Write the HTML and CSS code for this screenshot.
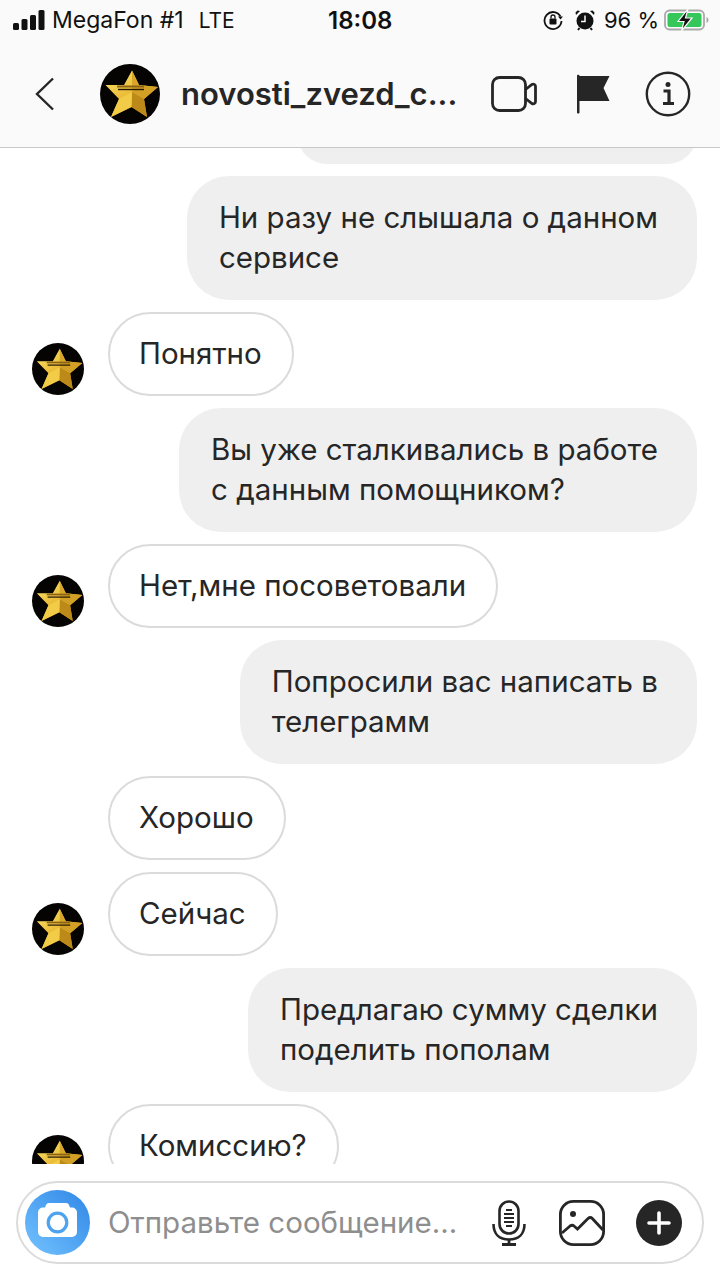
FILE: index.html
```html
<!DOCTYPE html>
<html lang="ru">
<head>
<meta charset="utf-8">
<title>novosti_zvezd_c</title>
<link rel="stylesheet" href="styles.css">
</head>
<body>
<svg class="defs" width="0" height="0" aria-hidden="true">
  <defs>
    <linearGradient id="gold" x1="0.15" y1="0" x2="0.8" y2="1">
      <stop offset="0" stop-color="#fbe36c"/>
      <stop offset="0.55" stop-color="#e8b52f"/>
      <stop offset="1" stop-color="#b57f14"/>
    </linearGradient>
    <linearGradient id="cam" x1="1" y1="0" x2="0" y2="1">
      <stop offset="0" stop-color="#2f86e6"/>
      <stop offset="1" stop-color="#74c3ff"/>
    </linearGradient>
    <symbol id="ava" viewBox="0 0 60 60">
      <circle cx="30" cy="30" r="30" fill="#050403"/>
      <path d="M32 6.500 39 21 58 23 44 35 47 53 31.500 43 11 53 19 35 5.500 21 24 21Z" fill="url(#gold)"/>
      <path d="M32 6.500 39 21 32 28Z" fill="#d9a528"/>
      <path d="M58 23 44 35 32 28 39 21Z" fill="#d3a026"/>
      <path d="M47 53 31.500 43 32 28 44 35Z" fill="#bd8a1a"/>
      <path d="M11 53 31.500 43 32 28 19 35Z" fill="#f2cc47"/>
      <path d="M17 22.500H44" stroke="#8a6414" stroke-width="2"/>
      <path d="M18 25.500H44" stroke="#241804" stroke-width="1.400"/>
    </symbol>
  </defs>
</svg>
<div class="screen">
  <header class="top">
    <div class="status">
      <div class="status-left">
        <svg class="signal" width="34" height="20" viewBox="0 0 34 20"><rect x="1" y="13" width="6" height="7" rx="1.500"/><rect x="9.500" y="9" width="6" height="11" rx="1.500"/><rect x="18" y="5" width="6" height="15" rx="1.500"/><rect x="26.500" y="0" width="6" height="20" rx="1.500"/></svg>
        <span class="carrier">MegaFon #1</span>
        <span class="net">LTE</span>
      </div>
      <div class="time">18:08</div>
      <div class="status-right">
        <svg width="20" height="20" viewBox="0 0 20 20" fill="none"><path d="M17.500 6.500A8.500 8.500 0 1 0 18.500 11" stroke="#111" stroke-width="1.800"/><path d="M15 6.500h5l-2.500 3z" fill="#111"/><rect x="6.500" y="8.500" width="7" height="6" rx="1" fill="#111"/><path d="M8 8.500V7a2 2 0 0 1 4 0v1.500" stroke="#111" stroke-width="1.300"/></svg>
        <svg class="alarm" width="20" height="22" viewBox="0 0 20 22"><circle cx="10" cy="12" r="8.500" fill="#111"/><path d="M1 6 5 2 2.500 1.500 0.500 3.500zM19 6 15 2 17.500 1.500 19.500 3.500z" fill="#111"/><path d="M4.500 19 3 21M15.500 19 17 21" stroke="#111" stroke-width="2"/><path d="M10 6.500V12.500H6" stroke="#fafafa" stroke-width="1.500" fill="none"/></svg>
        <span class="pct">96 %</span>
        <svg class="batt" width="46" height="22" viewBox="0 0 46 22"><rect x="1" y="1.500" width="39" height="19" rx="4.500" fill="none" stroke="#a9a9a9" stroke-width="1.800"/><rect x="3.500" y="4" width="34" height="14" rx="2.500" fill="#35c759"/><path d="M42.500 8v6c1.200-.5 2-1.600 2-3s-.8-2.500-2-3z" fill="#a9a9a9"/><path d="M24 0 14 12.500h6L17.500 22 28 9h-6.500z" fill="#111" stroke="#fafafa" stroke-width="1.200"/></svg>
      </div>
    </div>
    <div class="nav">
      <svg class="back" width="20" height="34" viewBox="0 0 20 34" fill="none"><path d="M18 1.500 2 17l16 15.500" stroke="#262626" stroke-width="2.400"/></svg>
      <svg class="nav-ava" width="60" height="60"><use href="#ava"/></svg>
      <div class="title">novosti_zvezd_c...</div>
      <svg class="video" width="46" height="36" viewBox="0 0 46 36" fill="none"><rect x="1.500" y="1.500" width="33" height="33" rx="7" stroke="#262626" stroke-width="2.800"/><path d="M34.500 13.500 41 8.500c1.500-1 3.500 0 3.500 2v15c0 2-2 3-3.500 2l-6.500-5" stroke="#262626" stroke-width="2.800"/></svg>
      <svg class="flag" width="34" height="40" viewBox="0 0 34 40"><path d="M1 1.500c0-1 2.500-1 2.500 0V2h30l-6 12 6 13H3.500v11.500c0 1.300-2.500 1.300-2.500 0z" fill="#262626"/></svg>
      <svg class="info" width="46" height="46" viewBox="0 0 46 46" fill="none"><circle cx="23" cy="23" r="21.200" stroke="#262626" stroke-width="2.400"/><circle cx="23" cy="13.500" r="2.500" fill="#262626"/><path d="M18.500 20H24V32M18 32.500H29" stroke="#262626" stroke-width="3.200"/></svg>
    </div>
  </header>

  <main class="chat">
    <div class="row out clipped"><div class="bubble grey stub"></div></div>
    <div class="row out"><div class="bubble grey">Ни разу не слышала о данном<br>сервисе</div></div>
    <div class="row in"><svg class="ava" width="52" height="52"><use href="#ava"/></svg><div class="bubble line">Понятно</div></div>
    <div class="row out"><div class="bubble grey">Вы уже сталкивались в работе<br>с данным помощником?</div></div>
    <div class="row in"><svg class="ava" width="52" height="52"><use href="#ava"/></svg><div class="bubble line">Нет,мне посоветовали</div></div>
    <div class="row out"><div class="bubble grey">Попросили вас написать в<br>телеграмм</div></div>
    <div class="row in"><div class="ava"></div><div class="bubble line">Хорошо</div></div>
    <div class="row in"><svg class="ava" width="52" height="52"><use href="#ava"/></svg><div class="bubble line">Сейчас</div></div>
    <div class="row out"><div class="bubble grey">Предлагаю сумму сделки<br>поделить пополам</div></div>
    <div class="row in"><svg class="ava" width="52" height="52"><use href="#ava"/></svg><div class="bubble line">Комиссию?</div></div>
  </main>

  <footer class="composer">
    <div class="field">
      <svg class="cam" width="65" height="65" viewBox="0 0 65 65"><circle cx="32.500" cy="32.500" r="32.500" fill="url(#cam)"/><path d="M24 13h17c1.500 0 2.500.7 3 2l1 2.500h2a5 5 0 0 1 5 5V42a5 5 0 0 1-5 5H18a5 5 0 0 1-5-5V22.500a5 5 0 0 1 5-5h2l1-2.500c.5-1.300 1.500-2 3-2z" fill="#fff"/><circle cx="32.500" cy="32.500" r="9.300" fill="none" stroke="#4da3ef" stroke-width="3.200"/></svg>
      <span class="ph">Отправьте сообщение...</span>
      <svg class="mic" width="34" height="46" viewBox="0 0 34 46" fill="none"><rect x="7.500" y="1.500" width="19" height="32" rx="9.500" stroke="#262626" stroke-width="2.600"/><path d="M14 10h6M12 14h10M12 18h10M12 22h10M14 26h6" stroke="#262626" stroke-width="2"/><path d="M1.500 24c0 10 6 15.500 15.500 15.500S32.500 34 32.500 24" stroke="#262626" stroke-width="2.600"/><path d="M17 39v5M10 44.500h14" stroke="#262626" stroke-width="2.800"/></svg>
      <svg class="pic" width="46" height="46" viewBox="0 0 46 46" fill="none"><rect x="1.400" y="1.400" width="43.200" height="43.200" rx="13" stroke="#262626" stroke-width="2.800"/><circle cx="14" cy="14" r="3" fill="#262626"/><path d="M3 33 11 26c1.500-1 3-1 4 0l3.500 3L29 18.500c1.500-1.300 3-1.300 4.300 0L44 30" stroke="#262626" stroke-width="2.800"/></svg>
      <svg class="plus" width="46" height="46" viewBox="0 0 46 46"><circle cx="23" cy="23" r="23" fill="#262626"/><path d="M23 13v20M13 23h20" stroke="#fff" stroke-width="3.600" stroke-linecap="round"/></svg>
    </div>
  </footer>
</div>
</body>
</html>
```

FILE: styles.css
```css
* { box-sizing: border-box; }
html, body { margin: 0; padding: 0; background: #fff; }
body { font-family: "Inter", "Liberation Sans", sans-serif; color: #262626; }
.defs { position: absolute; }
.screen { width: 720px; height: 1280px; display: flex; flex-direction: column; overflow: hidden; }

.top { height: 148px; flex: none; background: #fafafa; border-bottom: 1px solid #c8c8c8; }
.status { height: 40px; padding: 0 10px 0 12px; display: flex; align-items: center; color: #111; }
.status-left { display: flex; align-items: center; font-size: 23px; width: 316px; }
.signal { fill: #111; margin-right: 6px; }
.net { margin-left: 15px; font-size: 21px; }
.time { font-size: 24px; font-weight: 600; width: 64px; text-align: center; }
.status-right { margin-left: auto; display: flex; align-items: center; }
.alarm { margin-left: 12px; }
.pct { font-size: 22px; margin: 0 5px 0 9px; }

.nav { height: 107px; display: flex; align-items: center; padding: 0 0 0 35px; }
.back { margin-right: 45px; }
.nav-ava { margin-right: 21px; }
.title { font-size: 31px; font-weight: 600; width: 310px; white-space: nowrap; }
.flag { margin-left: 39px; }
.info { margin-left: 35px; }

.chat { height: 1016px; flex: none; overflow: hidden; display: flex; flex-direction: column; gap: 12px; padding: 0 23px 0 32px; }
.row { display: flex; align-items: flex-end; flex: none; }
.row.out { justify-content: flex-end; }
.row.clipped { height: 16px; align-items: flex-end; }
.ava { width: 52px; height: 52px; flex: none; margin-right: 24px; margin-bottom: 1px; }
.bubble { font-size: 29.5px; line-height: 40px; padding: 21px 39px 23px 32px; border-radius: 42px; white-space: nowrap; }
.bubble.grey { background: #efefef; }
.bubble.line { border: 2px solid #dbdbdb; padding: 19px 30px 21px 29px; background: #fff; }
.bubble.stub { width: 400px; height: 60px; flex: none; }

.composer { flex: 1; padding: 17px 16px 16px; background: #fff; }
.field { height: 83px; border: 2px solid #dbdbdb; border-radius: 42px; display: flex; align-items: center; padding-left: 7px; }
.cam { flex: none; }
.ph { font-size: 29.5px; line-height: 40px; padding-bottom: 2px; color: #8e8e8e; margin-left: 18px; width: 384px; white-space: nowrap; }
.mic { flex: none; }
.pic { margin-left: 33px; flex: none; }
.plus { margin-left: 31px; flex: none; }
```
